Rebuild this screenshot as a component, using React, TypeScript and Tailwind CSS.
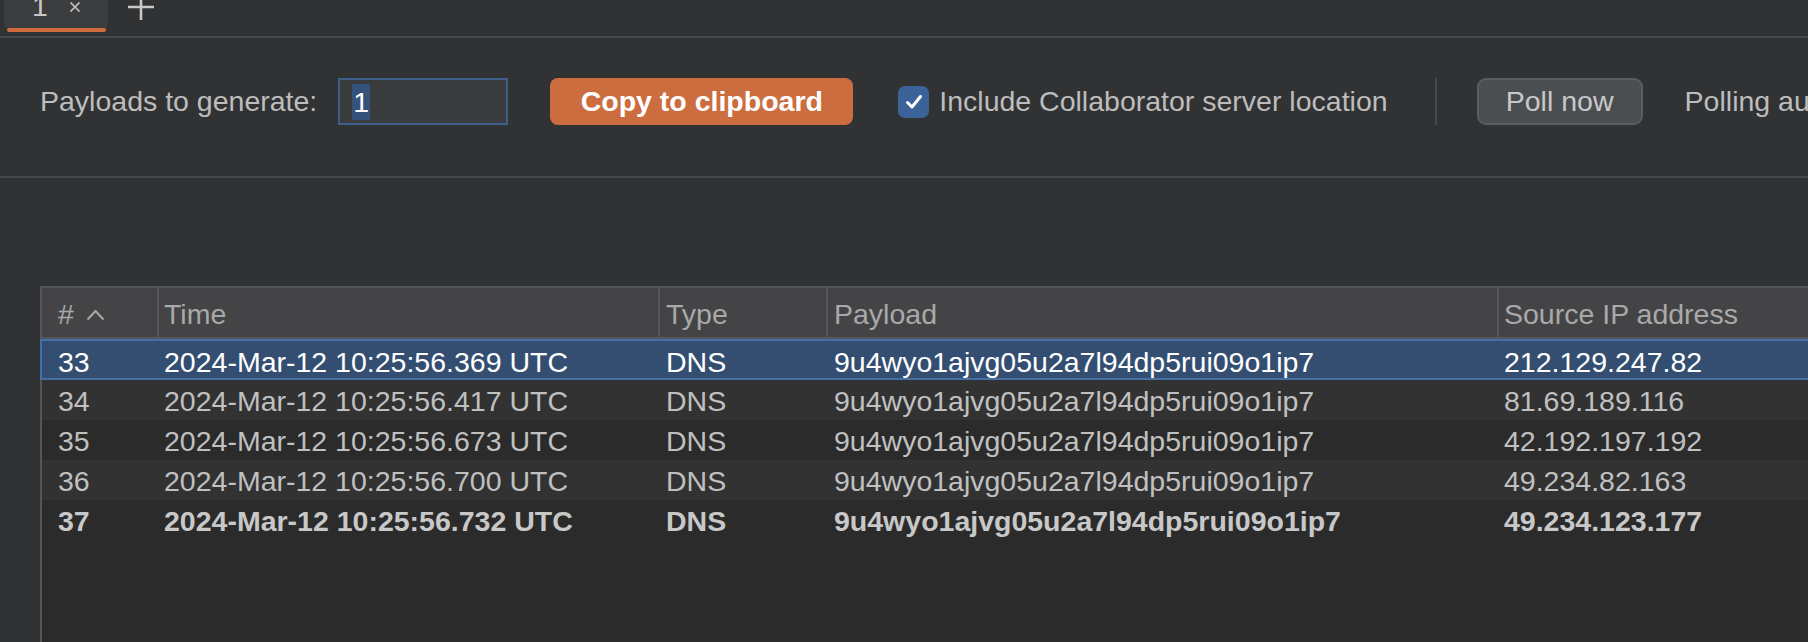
import React from "react";

const rows = [
  { id: 33, time: "2024-Mar-12 10:25:56.369 UTC", ip: "212.129.247.82" },
  { id: 34, time: "2024-Mar-12 10:25:56.417 UTC", ip: "81.69.189.116" },
  { id: 35, time: "2024-Mar-12 10:25:56.673 UTC", ip: "42.192.197.192" },
  { id: 36, time: "2024-Mar-12 10:25:56.700 UTC", ip: "49.234.82.163" },
  { id: 37, time: "2024-Mar-12 10:25:56.732 UTC", ip: "49.234.123.177" },
];

const payload = "9u4wyo1ajvg05u2a7l94dp5rui09o1ip7";

const cols = "grid grid-cols-[115px_501px_168px_671px_1fr]";

export default function App() {
  return (
    <div
      className="w-[1808px] h-[642px] overflow-hidden bg-[#313234] flex flex-col text-[28.5px] text-[#bdbdbd]"
      style={{ fontFamily: '"Liberation Sans", Arial, sans-serif' }}
    >
      {/* tabs */}
      <div className="h-[38px] shrink-0 flex items-start pl-[4px] gap-[20px] border-b-2 border-[#48494b]">
        <div className="relative shrink-0 w-[104px] h-[32px] bg-[#3c3d3f] rounded-b-[10px] flex items-start">
          <span className="ml-[28px] -mt-[8px] leading-[28px] text-[#c8c8c8]">1</span>
          <svg className="ml-[21px] mt-[1px]" width="12" height="12" viewBox="0 0 12 12">
            <path d="M1.5 1.5 L10.5 10.5 M10.5 1.5 L1.5 10.5" stroke="#c8c8c8" strokeWidth="1.6" />
          </svg>
          <div className="absolute left-[3px] right-[2px] bottom-0 h-[4px] rounded-full bg-[#cf6d3f]" />
        </div>
        <svg className="-mt-[6px] shrink-0" width="26" height="26" viewBox="0 0 26 26">
          <path d="M13 0 V26 M0 13 H26" stroke="#c8c8c8" strokeWidth="2.6" />
        </svg>
      </div>

      {/* toolbar */}
      <div className="shrink-0 pt-[40px] pb-[51px] pl-[40px] flex items-center h-[140px] border-b-2 border-[#48494b] whitespace-nowrap">
        <span className="shrink-0">Payloads to generate:</span>
        <div className="shrink-0 ml-[21px] w-[170px] h-[47px] border-2 border-[#3d5f8c] bg-[#3a3b3d] flex items-center pl-[12px]">
          <span className="bg-[#34527a] text-white leading-[36px] px-[1px]">1</span>
        </div>
        <button className="shrink-0 ml-[42px] w-[303px] h-[47px] rounded-[8px] bg-[#cc6d40] text-white font-bold">
          Copy to clipboard
        </button>
        <div className="shrink-0 ml-[45px] w-[31px] h-[32px] rounded-[7px] bg-[#3b6399] flex items-center justify-center">
          <svg width="18" height="16" viewBox="0 0 18 16">
            <path d="M2.5 8.5 L7 13 L15.5 2.5" fill="none" stroke="white" strokeWidth="3" strokeLinecap="round" strokeLinejoin="round" />
          </svg>
        </div>
        <span className="shrink-0 ml-[10px]">Include Collaborator server location</span>
        <div className="shrink-0 ml-[47px] w-[2px] h-[47px] bg-[#48494b]" />
        <button className="shrink-0 ml-[40px] w-[166px] h-[47px] rounded-[9px] bg-[#4b4e51] border-2 border-[#5b5e61] text-[#c8c8c8]">
          Poll now
        </button>
        <span className="shrink-0 ml-[42px]">Polling automatically every 60 seconds</span>
      </div>

      {/* table */}
      <div className="mt-[108px] ml-[40px] w-[1900px] flex-1 flex flex-col border-t-2 border-l-2 border-[#555658] bg-[#2b2b2b]">
        <div className={`${cols} h-[51px] shrink-0 bg-[#444446] border-b-2 border-[#555658] text-[#a9a9a9]`}>
          <div className="pl-[16px] pt-[4px] flex items-center gap-[12px]">
            <span>#</span>
            <svg width="19" height="12" viewBox="0 0 19 12">
              <path d="M1.5 10.5 L9.5 2 L17.5 10.5" fill="none" stroke="#a9a9a9" strokeWidth="2" />
            </svg>
          </div>
          <div className="border-l-2 border-[#555658] pl-[5px] pt-[4px] flex items-center">Time</div>
          <div className="border-l-2 border-[#555658] pl-[6px] pt-[4px] flex items-center">Type</div>
          <div className="border-l-2 border-[#555658] pl-[6px] pt-[4px] flex items-center">Payload</div>
          <div className="border-l-2 border-[#555658] pl-[5px] pt-[4px] flex items-center">Source IP address</div>
        </div>
        {rows.map((r, i) => {
          const selected = i === 0;
          const bold = i === rows.length - 1;
          const rowCls = selected
            ? "-ml-[2px] h-[41px] bg-[#344e72] border-2 border-[#4470a6] text-white"
            : i % 2 === 1
            ? "h-[40px] bg-[#323233] text-[#c0c0c0]"
            : "h-[40px] bg-[#2b2b2b] text-[#c0c0c0]";
          return (
            <div key={r.id} className={`${cols} shrink-0 items-center pb-[6px] whitespace-nowrap ${rowCls} ${bold ? "font-bold text-[#c8c8c8]" : ""}`}>
              <span className="pl-[16px]">{r.id}</span>
              <span className="pl-[7px]">{r.time}</span>
              <span className="pl-[8px]">DNS</span>
              <span className="pl-[8px]">{payload}</span>
              <span className="pl-[7px]">{r.ip}</span>
            </div>
          );
        })}
      </div>
    </div>
  );
}
